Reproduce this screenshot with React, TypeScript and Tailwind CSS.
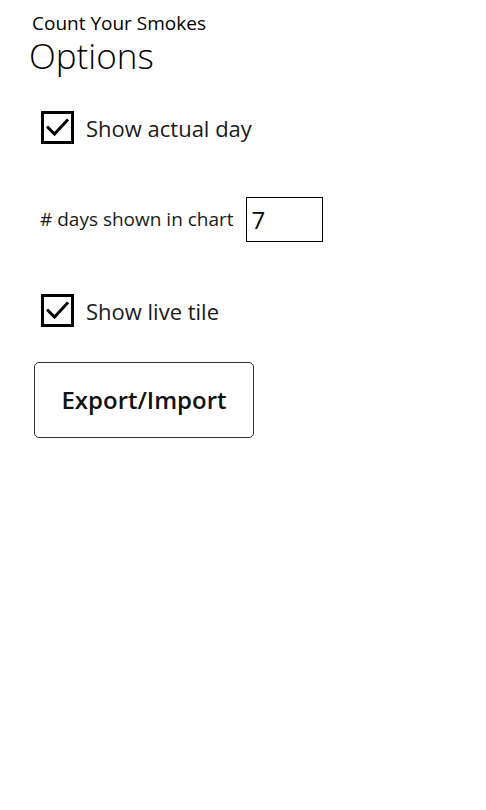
import { useState } from "react";

function CheckBox({ checked, onToggle, label }: { checked: boolean; onToggle: () => void; label: string }) {
  return (
    <button type="button" onClick={onToggle} className="flex items-center gap-[12px] text-left">
      <span className="flex h-[33px] w-[33px] items-center justify-center border-[3px] border-black bg-white">
        {checked ? (
          <svg width="23" height="19" viewBox="0 0 23 19" fill="none">
            <path d="M2 9.5 L8.5 16 L21 2.5" stroke="black" strokeWidth="3" strokeLinecap="square" />
          </svg>
        ) : null}
      </span>
      <span className="text-[22px] leading-none text-[#1a1a1a]">{label}</span>
    </button>
  );
}

export default function App() {
  const [actualDay, setActualDay] = useState(true);
  const [liveTile, setLiveTile] = useState(true);
  const [days, setDays] = useState("7");

  return (
    <div className="min-h-[810px] w-full bg-white text-black" style={{ fontFamily: '"Open Sans", "Noto Sans", sans-serif' }}>
      <div className="pl-[32px] pt-[10px]">
        <div className="text-[19px] leading-[26px]">Count Your Smokes</div>
        <h1 className="-ml-[3px] text-[35px] font-light leading-[40px]">Options</h1>
      </div>

      <div className="mt-[35px] pl-[41px]">
        <CheckBox checked={actualDay} onToggle={() => setActualDay(!actualDay)} label="Show actual day" />
      </div>

      <div className="mt-[53px] flex items-center pl-[40px]">
        <label htmlFor="days" className="text-[19px] text-[#1a1a1a]">
          # days shown in chart
        </label>
        <input
          id="days"
          value={days}
          onChange={(e) => setDays(e.target.value)}
          className="ml-[12px] h-[45px] w-[77px] border border-black px-[5px] text-[24px] outline-none"
        />
      </div>

      <div className="mt-[52px] pl-[41px]">
        <CheckBox checked={liveTile} onToggle={() => setLiveTile(!liveTile)} label="Show live tile" />
      </div>

      <div className="mt-[35px] pl-[34px]">
        <button
          type="button"
          className="h-[76px] w-[220px] rounded-[5px] border border-[#333] text-[24px] font-semibold text-[#111]"
        >
          Export/Import
        </button>
      </div>
    </div>
  );
}
